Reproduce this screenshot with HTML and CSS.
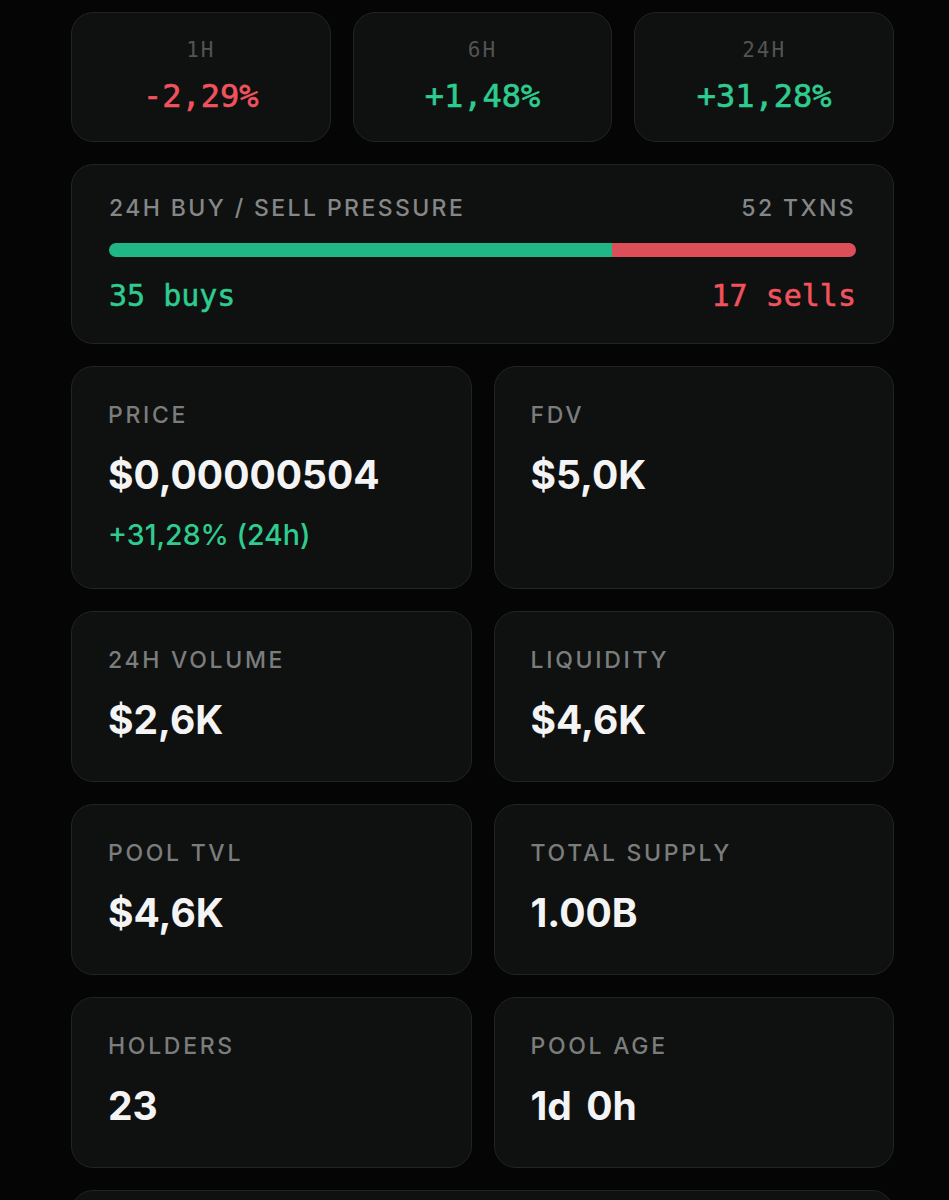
FILE: index.html
```html
<!DOCTYPE html>
<html lang="en">
<head>
  <meta charset="UTF-8" />
  <meta name="viewport" content="width=device-width, initial-scale=1.0"/>
  <title>Token stats</title>
  <link rel="stylesheet" href="styles.css">
</head>
<body>
  <div class="stats">

    <div class="changes">
      <div class="tile">
        <div class="tile-label">1H</div>
        <div class="tile-value down">-2,29%</div>
      </div>
      <div class="tile">
        <div class="tile-label">6H</div>
        <div class="tile-value up">+1,48%</div>
      </div>
      <div class="tile">
        <div class="tile-label">24H</div>
        <div class="tile-value up">+31,28%</div>
      </div>
    </div>

    <div class="card pressure">
      <div class="pressure-head">
        <span>24H BUY / SELL PRESSURE</span>
        <span>52 TXNS</span>
      </div>
      <div class="bar">
        <div class="bar-buys" style="width: 67.3%"></div>
        <div class="bar-sells"></div>
      </div>
      <div class="pressure-foot">
        <span class="up">35 buys</span>
        <span class="down">17 sells</span>
      </div>
    </div>

    <div class="grid">
      <div class="card stat">
        <div class="stat-label">Price</div>
        <div class="stat-value">$0,00000504</div>
        <div class="stat-sub up">+31,28% (24h)</div>
      </div>
      <div class="card stat">
        <div class="stat-label">FDV</div>
        <div class="stat-value">$5,0K</div>
      </div>
      <div class="card stat">
        <div class="stat-label">24H Volume</div>
        <div class="stat-value">$2,6K</div>
      </div>
      <div class="card stat">
        <div class="stat-label">Liquidity</div>
        <div class="stat-value">$4,6K</div>
      </div>
      <div class="card stat">
        <div class="stat-label">Pool TVL</div>
        <div class="stat-value">$4,6K</div>
      </div>
      <div class="card stat">
        <div class="stat-label">Total Supply</div>
        <div class="stat-value">1.00B</div>
      </div>
      <div class="card stat">
        <div class="stat-label">Holders</div>
        <div class="stat-value">23</div>
      </div>
      <div class="card stat">
        <div class="stat-label">Pool Age</div>
        <div class="stat-value">1d 0h</div>
      </div>
    </div>

    <div class="card more"></div>
  </div>
</body>
</html>
```

FILE: styles.css
```css
body {
  margin: 0;
  background-color: #050505;
  font-family: Inter, "Noto Sans", sans-serif;
  color: #f2f2f2;
  overflow: hidden;
}

.stats {
  width: 823px;
  padding: 12px 0 0 71px;
  display: flex;
  flex-direction: column;
  gap: 22px;
}

.up { color: #2ecc8f; }
.down { color: #f0535e; }

.card,
.tile {
  box-sizing: border-box;
  background-color: #0f1010;
  border: 1.5px solid #222323;
  border-radius: 22px;
}

/* top row: 1h / 6h / 24h */
.changes {
  display: grid;
  grid-template-columns: repeat(3, 1fr);
  gap: 22px;
}
.tile {
  height: 130px;
  padding-top: 20px;
  text-align: center;
  font-family: "DejaVu Sans Mono", monospace;
}
.tile-label {
  line-height: 34px;
  font-size: 21px;
  letter-spacing: 2px;
  color: #535454;
}
.tile-value {
  margin-top: 7px;
  line-height: 44px;
  font-size: 32px;
  -webkit-text-stroke: 0.6px currentColor;
}

/* buy / sell pressure */
.pressure {
  height: 180px;
  padding: 26px 37px 0 37px;
}
.pressure-head {
  display: flex;
  justify-content: space-between;
  line-height: 34px;
  font-size: 23px;
  font-weight: 500;
  letter-spacing: 2.4px;
  color: #858787;
}
.bar {
  display: flex;
  height: 14px;
  margin-top: 18px;
  border-radius: 7px;
  overflow: hidden;
}
.bar-buys { background-color: #20b685; }
.bar-sells { flex: 1; background-color: #dc4f58; }
.pressure-foot {
  display: flex;
  justify-content: space-between;
  margin-top: 19px;
  line-height: 40px;
  font-family: "DejaVu Sans Mono", monospace;
  font-size: 30px;
  -webkit-text-stroke: 0.5px currentColor;
}

/* stat cards */
.grid {
  display: grid;
  grid-template-columns: 1fr 1fr;
  gap: 22px;
}
.stat {
  padding: 30px 36px 35px 36px;
}
.stat-label {
  line-height: 36px;
  font-size: 23px;
  font-weight: 500;
  letter-spacing: 2.7px;
  text-transform: uppercase;
  color: #7b7d7d;
}
.stat-value {
  margin-top: 16px;
  line-height: 52px;
  font-size: 39px;
  font-weight: 700;
  word-spacing: 5px;
  color: #f4f4f4;
}
.stat-sub {
  margin-top: 16px;
  line-height: 36px;
  font-size: 28.5px;
  font-weight: 500;
}

.more {
  height: 200px;
}
```
